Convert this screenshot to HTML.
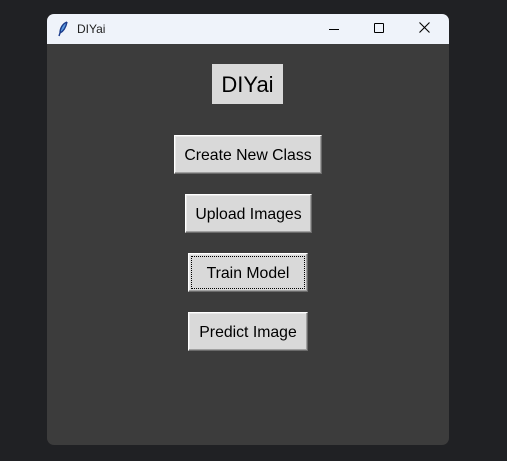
<!DOCTYPE html><html><head><style>
body{margin:0;width:507px;height:461px;background:#202124;position:relative;overflow:hidden;font-family:"Liberation Sans",sans-serif}
.win{position:absolute;left:47px;top:14px;width:402px;height:431px;background:#3c3c3c;border-radius:7px;overflow:hidden}
.tb{position:absolute;left:0;top:0;width:402px;height:30px;background:#eff3fa}
.tt{position:absolute;left:30px;top:8px;font-size:12px;color:#222}
.lbl{position:absolute;left:165px;top:50px;width:71px;height:40px;background:#d9d9d9;font-size:22px;line-height:42px;text-align:center;color:#000}
.b{position:absolute;box-sizing:border-box;background:#d9d9d9;border:1px solid #fff;border-right-color:#6a6a6a;border-bottom-color:#6a6a6a;box-shadow:inset -1px -1px 0 #a0a0a0,inset 1px 1px 0 #e8e8e8;font-size:15.8px;text-align:center;line-height:39px;color:#000}
</style></head><body>
<div class="win">
<div class="tb">
<svg style="position:absolute;left:10px;top:7px" width="12" height="16" viewBox="0 0 12 16"><path d="M10 1 C5 3 3 8 3 12 L2 15 M3 12 C7 10 9 6 10 1" stroke="#1a3a8a" stroke-width="1.4" fill="#5b9be0"/></svg>
<div class="tt">DIYai</div>
<div style="position:absolute;left:282px;top:15px;width:10px;height:1px;background:#000"></div>
<div style="position:absolute;left:327px;top:9px;width:8px;height:8px;border:1px solid #000;border-radius:1px"></div>
<svg style="position:absolute;left:372px;top:8px" width="11" height="11"><path d="M0.5 0.5L10.5 10.5M10.5 0.5L0.5 10.5" stroke="#000" stroke-width="1.1"/></svg>
</div>
<div class="lbl">DIYai</div>
<div class="b" style="left:127px;top:121px;width:148px;height:39px">Create New Class</div>
<div class="b" style="left:138px;top:180px;width:127px;height:39px">Upload Images</div>
<div class="b" style="left:141px;top:239px;width:120px;height:39px;outline:1px dotted #000;outline-offset:-4px">Train Model</div>
<div class="b" style="left:141px;top:298px;width:120px;height:39px">Predict Image</div>
</div>
</body></html>
